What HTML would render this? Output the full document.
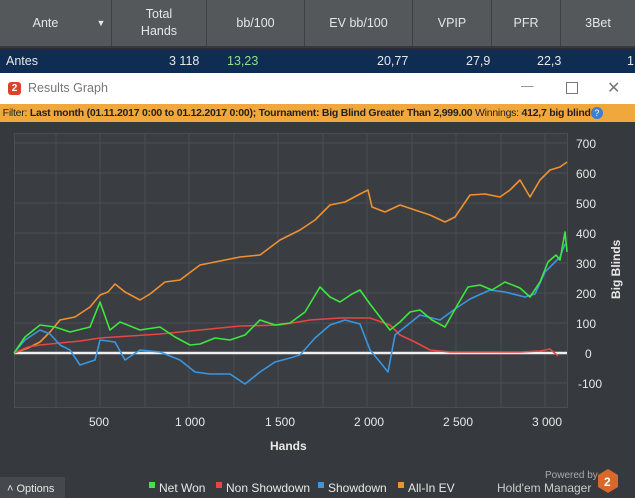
<!DOCTYPE html>
<html><head><style>
body{margin:0;width:635px;height:498px;overflow:hidden;background:#36393d;font-family:"Liberation Sans",sans-serif;position:relative}
.hdr{position:absolute;left:0;top:0;width:635px;height:46px;background:#55585b;color:#e6e6e6;font-size:12.5px}
.hdr div{position:absolute;top:0;height:46px;display:flex;align-items:center;justify-content:center;text-align:center;line-height:17px;border-right:1px solid #3e4144}
.row{position:absolute;left:0;top:48px;width:635px;height:23px;background:#0f2c52;color:#e8e8e8;font-size:12.5px;border-top:2px solid #2b2e31}
.row span{position:absolute;top:4px}
.title{position:absolute;left:0;top:73px;width:635px;height:31px;background:#fff;color:#777;font-size:12.5px}
.filter{position:absolute;left:0;top:104px;width:635px;height:18px;background:#f0a83c;color:#222;font-size:10.5px;letter-spacing:-0.25px;line-height:18px;white-space:nowrap;overflow:hidden}
</style></head><body>
<div class="hdr">
<div style="left:0;width:91px;border:none">Ante</div><div style="left:91px;width:20px;font-size:9px">▼</div>
<div style="left:112px;width:94px">Total<br>Hands</div>
<div style="left:207px;width:97px">bb/100</div>
<div style="left:305px;width:107px">EV bb/100</div>
<div style="left:413px;width:78px">VPIP</div>
<div style="left:492px;width:68px">PFR</div>
<div style="left:561px;width:74px;border:none">3Bet</div>
</div>
<div class="row"><span style="left:6px">Antes</span><span style="left:169px">3 118</span><span style="left:227px;color:#8fe08f">13,23</span><span style="left:377px">20,77</span><span style="left:466px">27,9</span><span style="left:537px">22,3</span><span style="left:627px">1</span></div>
<div class="title"><div style="position:absolute;left:8px;top:9px;width:13px;height:13px;border-radius:3px;background:#d9442a;color:#fff;font-size:10px;font-weight:bold;text-align:center;line-height:13px">2</div><span style="position:absolute;left:28px;top:8px">Results Graph</span>
<span style="position:absolute;left:521px;top:6px;color:#888">—</span><div style="position:absolute;left:566px;top:9px;width:10px;height:10px;border:1px solid #777"></div><span style="position:absolute;left:607px;top:5px;font-size:16px;color:#777">✕</span></div>
<div class="filter">&nbsp;Filter: <b>Last month (01.11.2017 0:00 to 01.12.2017 0:00); Tournament: Big Blind Greater Than 2,999.00</b> Winnings: <b>412,7 big blind</b><span style="display:inline-block;width:12px;height:12px;border-radius:6px;background:#3a7fd0;color:#fff;font-size:9px;text-align:center;line-height:12px;vertical-align:middle">?</span></div>
<svg style="position:absolute;left:0;top:122px" width="635" height="376">
<g stroke="#4a4d51" stroke-width="1">
<rect x="14.5" y="11.5" width="553" height="274" fill="#3a3d41"/>
<path d="M14 21H567M14 51H567M14 81H567M14 111H567M14 141H567M14 171H567M14 201H567M14 231H567M14 261H567"/>
<path d="M56 11V285M100 11V285M145 11V285M189 11V285M234 11V285M278 11V285M323 11V285M367 11V285M412 11V285M456 11V285M501 11V285M545 11V285"/>
</g>
<path d="M14 231H567" stroke="#eee" stroke-width="2.5"/>
<g fill="none" stroke-width="1.6" stroke-linejoin="round">
<polyline stroke="#f0912f" points="14,231 28,226 40,220 50,210 60,198 75,195 90,185 100,173 108,170 115,162 125,170 140,178 150,172 165,160 180,158 200,143 215,140 240,135 260,133 280,118 300,108 315,98 330,83 345,80 360,72 368,68 372,85 385,90 400,83 415,88 430,93 445,100 455,95 470,73 485,72 500,75 510,68 520,58 530,75 540,58 550,48 560,45 567,40"/>
<polyline stroke="#e84545" points="14,231 28,225 40,223 60,221 80,219 100,216 130,214 160,212 200,208 240,204 280,203 310,198 340,196 370,196 390,203 400,213 415,220 430,228 450,230 480,230 520,230 540,229 550,227 558,234"/>
<polyline stroke="#3a96e0" points="14,231 25,218 40,208 50,212 60,223 70,228 80,243 95,238 100,218 115,220 125,238 140,228 160,230 180,238 195,250 210,252 230,252 245,262 260,250 275,240 290,236 300,233 315,216 330,203 345,198 360,202 370,228 380,240 388,250 395,213 405,205 420,193 440,198 455,187 470,177 490,168 505,170 525,175 535,172 545,150 555,140 560,135 565,122"/>
<polyline stroke="#3ee63e" points="14,231 25,215 40,203 55,205 70,210 90,205 100,180 110,208 120,200 140,208 160,205 175,215 190,223 200,222 215,216 230,218 245,213 260,198 275,203 290,201 305,190 320,165 330,175 340,180 352,172 360,168 370,182 380,195 390,208 400,200 410,190 420,188 432,198 445,205 458,182 468,165 480,163 492,168 505,160 520,166 530,175 540,160 548,140 556,133 560,138 565,110 567,130"/>
</g>
<g fill="#e8e8e8" font-size="12" font-family="Liberation Sans">
<text x="576" y="26">700</text><text x="576" y="56">600</text><text x="576" y="86">500</text><text x="576" y="116">400</text><text x="576" y="146">300</text><text x="576" y="176">200</text><text x="576" y="206">100</text><text x="585" y="236">0</text><text x="578" y="266">-100</text>
<text x="89" y="304">500</text><text x="175" y="304">1 000</text><text x="265" y="304">1 500</text><text x="354" y="304">2 000</text><text x="443" y="304">2 500</text><text x="532" y="304">3 000</text>
<text x="270" y="328" font-weight="bold">Hands</text>
<text transform="translate(620,177) rotate(-90)" font-weight="bold">Big Blinds</text>
<rect x="149" y="360" width="6" height="6" fill="#3ee63e"/><text x="159" y="370">Net Won</text>
<rect x="216" y="360" width="6" height="6" fill="#e84545"/><text x="226" y="370">Non Showdown</text>
<rect x="318" y="360" width="6" height="6" fill="#3a96e0"/><text x="328" y="370">Showdown</text>
<rect x="398" y="360" width="6" height="6" fill="#f0912f"/><text x="408" y="370">All-In EV</text>
<text x="545" y="356" font-size="10" fill="#aaa">Powered by</text>
<text x="497" y="370" fill="#ccc">Hold'em Manager</text>
</g>
<polygon points="608,347 618,353 618,365 608,371 598,365 598,353" fill="#d8692a"/><text x="604" y="364" font-size="12" font-weight="bold" fill="#fff" font-family="Liberation Sans">2</text>
<rect x="0" y="355" width="65" height="21" fill="#45484c"/><text x="7" y="370" font-size="11" fill="#e8e8e8" font-family="Liberation Sans">˄  Options</text>
</svg>
</body></html>
